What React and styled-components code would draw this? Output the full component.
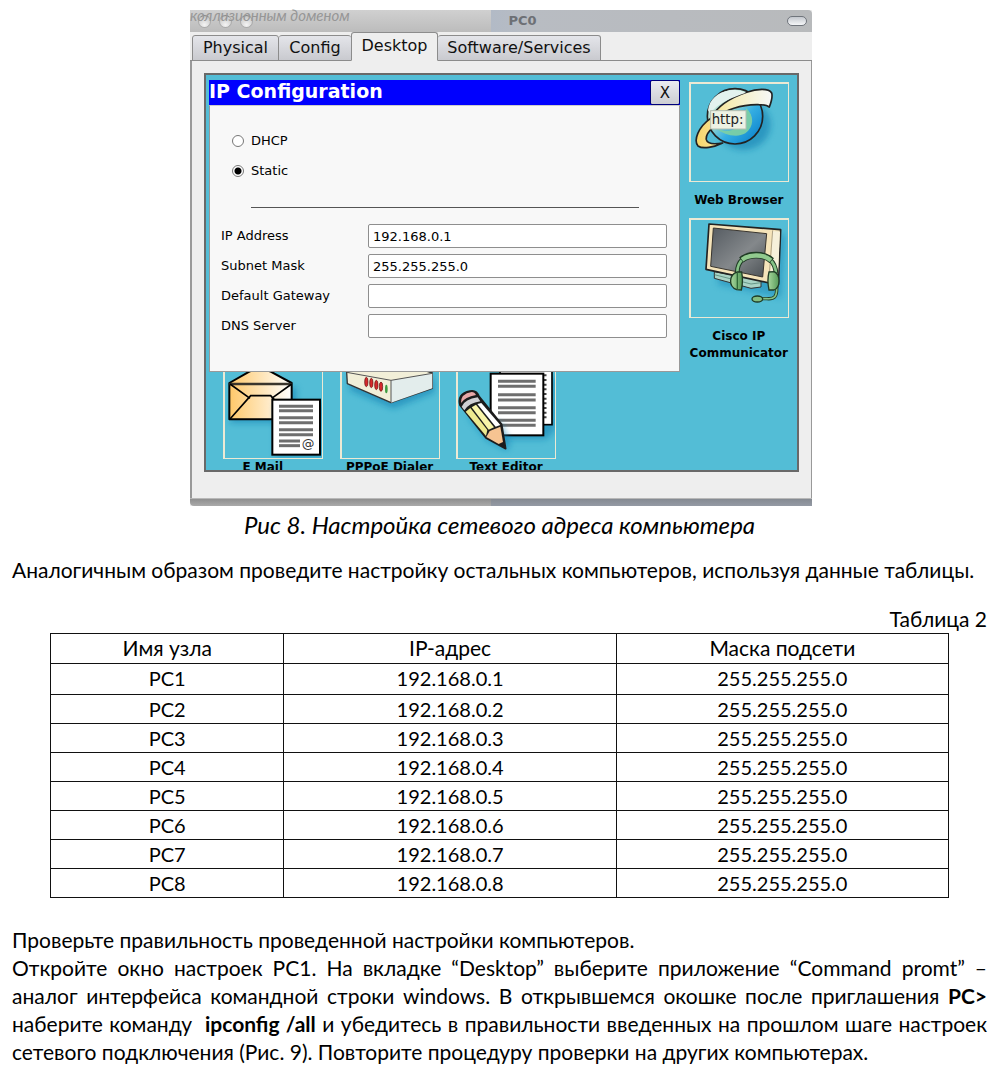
import React, { useState } from "react";
import styled, { createGlobalStyle } from "styled-components";

const uiFont = '"DejaVu Sans", Verdana, sans-serif';
const bodyFont = 'Lato, "Open Sans", sans-serif';

const GlobalStyle = createGlobalStyle`
  *, *::before, *::after { box-sizing: border-box; }
  body { margin: 0; background: #fff; color: #000; font-family: ${bodyFont}; }
`;

const Page = styled.main`
  padding: 10px 16px 12px 12px;
  font-size: 21px;
  line-height: 28px;
`;

const Figure = styled.figure`
  margin: 0;
  display: flex;
  flex-direction: column;
  align-items: center;
`;

const Caption = styled.figcaption`
  margin-top: 5px;
  font-style: italic;
  font-size: 24px;
`;

const AppWindow = styled.section`
  width: 622px;
  max-width: 100%;
  margin-left: 3px;
  font-family: ${uiFont};
  line-height: 16px;
  background: #eee;
`;

const TitleBar = styled.header`
  position: relative;
  display: flex;
  align-items: center;
  height: 22px;
  border-radius: 0 4px 0 0;
  background:
    linear-gradient(90deg, #b2bac6, #b8bcc2 12%, #b8babc) right / 321px 100% no-repeat,
    linear-gradient(#d0d0d0, #bcbcbc);
`;

const Ghost = styled.span`
  position: absolute;
  left: 0;
  top: -3px;
  font: italic 15px/16px ${bodyFont};
  color: #969696;
  white-space: nowrap;
`;

const Lights = styled.div`
  flex: 1 1 48px;
  display: flex;
  gap: 8px;
  padding-left: 8px;
`;

const Light = styled.span`
  width: 13px;
  height: 13px;
  border-radius: 50%;
  border: 1px solid #aaa;
  border-top-color: #888;
  background: radial-gradient(circle at 50% 80%, #f4f4f4, #bdbdbd);
`;

const WindowTitle = styled.h1`
  margin: 0;
  font-size: 13px;
  font-weight: 700;
  color: #6d7075;
`;

const Pill = styled.button`
  width: 20px;
  height: 10px;
  padding: 0;
  border: 1px solid #70757c;
  border-radius: 5px;
  background: linear-gradient(#c4c8ce, #f5f6f8);
`;

const TitleEnd = styled.div`
  flex: 1 1 0;
  display: flex;
  justify-content: flex-end;
  padding-right: 5px;
`;

const Tabs = styled.nav`
  display: flex;
  align-items: flex-end;
  height: 29px;
  padding-left: 2px;
  box-shadow: inset 0 -1px #8c8c8c;
`;

const Tab = styled.button`
  width: ${(p) => p.$width}px;
  height: ${(p) => (p.$active ? 29 : 26)}px;
  padding: 0 0 ${(p) => (p.$active ? 2 : 1)}px;
  border: 1px solid #8c8c8c;
  border-left-width: ${(p) => (p.$first || p.$active ? 1 : 0)}px;
  border-right-width: ${(p) => (p.$beforeActive ? 0 : 1)}px;
  border-bottom-color: ${(p) => (p.$active ? "#eee" : "#8c8c8c")};
  border-radius: 3px 3px 0 0;
  background: ${(p) => (p.$active ? "#eee" : "linear-gradient(#e4e5ea, #c9cacf)")};
  font: 16px/20px ${uiFont};
  color: #111;
  white-space: nowrap;
`;

const Pane = styled.div`
  padding: 12px 12px 26px 12px;
  border-left: 2px solid #999;
  border-right: 1px solid #999;
`;

const WindowFoot = styled.div`
  height: 8px;
  border-top: 1px solid #b8b8b8;
  border-radius: 0 0 0 4px;
  background:
    linear-gradient(#858a92, #949aa4) right / 321px 100% no-repeat,
    linear-gradient(#8f8f8f, #aaa);
`;

const Desktop = styled.div`
  position: relative;
  display: grid;
  grid-template-columns: repeat(5, 1fr);
  grid-template-rows: 136px 141px 1fr;
  height: 399px;
  padding: 7px 0 0 9px;
  overflow: hidden;
  border: 2px solid #696969;
  background: #53bdd6;
`;

const Shortcut = styled.div`
  grid-column: ${(p) => p.$col};
  grid-row: ${(p) => p.$row};
  min-width: 0;
  display: flex;
  flex-direction: column;
  align-items: center;
  gap: ${(p) => (p.$row === 3 ? 0 : 10)}px;
  font-size: 12px;
  font-weight: 700;
  line-height: 17px;
  text-align: center;
`;

const Tile = styled.div`
  flex: none;
  width: 100px;
  height: 100px;
  border: solid #ece9d4;
  border-width: 2px 1px 1px 2px;
  svg { display: block; width: 97px; height: 97px; }
`;

const Dialog = styled.form`
  position: absolute;
  left: 3px;
  top: 5px;
  width: 471px;
`;

const DialogBar = styled.div`
  display: flex;
  align-items: flex-start;
  justify-content: space-between;
  height: 25px;
  background: #0000fe;
  color: #fff;
`;

const DialogTitle = styled.h2`
  margin: 0;
  font-size: 19px;
  line-height: 22px;
  font-weight: 700;
`;

const CloseButton = styled.button`
  width: 30px;
  height: 25px;
  padding: 0;
  border: 1px solid #00007c;
  border-radius: 2px;
  background: linear-gradient(#eaebf0, #cdced3);
  font: 15px/20px ${uiFont};
  color: #111;
`;

const DialogBody = styled.div`
  height: 267px;
  padding: 20px 12px 0 11px;
  border: 1px solid #999;
  border-top-color: #ccc;
  background: #f8f8f8;
  font-size: 13px;
`;

const RadioLabel = styled.label`
  display: flex;
  align-items: center;
  gap: 7px;
  height: 30px;
  padding-left: 11px;
`;

const Radio = styled.input`
  appearance: none;
  width: 12px;
  height: 12px;
  margin: 0;
  border: 1px solid #777;
  border-radius: 50%;
  background: #fff;
  &:checked { background: radial-gradient(circle, #000 0 3px, #fff 4px); }
`;

const Rule = styled.hr`
  height: 1px;
  margin: 21px 28px 13px 30px;
  border: 0;
  background: #555;
`;

const Field = styled.label`
  display: grid;
  grid-template-columns: 147px 1fr;
  align-items: center;
  height: 30px;
`;

const FieldInput = styled.input`
  width: 100%;
  height: 24px;
  padding: 0 4px;
  border: 1px solid #8e8e8e;
  border-radius: 2px;
  background: #fff;
  font: 13px/16px ${uiFont};
  color: #000;
`;

const Paragraph = styled.p`
  margin: ${(p) => p.$top || 0}px 0 0;
  text-align: ${(p) => p.$align || "left"};
`;

const HostTable = styled.table`
  width: calc(100% - 76px);
  margin: 0 38px;
  table-layout: fixed;
  border-collapse: collapse;
  line-height: 28px;
  text-align: center;
  th, td {
    height: 29px;
    padding: 0;
    border: 1px solid #111;
    font-weight: 400;
    vertical-align: top;
  }
  td { font-size: 20px; }
  thead th { height: 30px; }
  tbody tr:first-child td { height: 31px; }
`;

const BrowserIcon = () => (
  <svg viewBox="63 43 291 291" aria-hidden="true">
    <defs>
      <linearGradient id="globe" x1="0" y1="0" x2="1" y2="1">
        <stop offset="0" stopColor="#eef7f8" /><stop offset=".35" stopColor="#a5dccb" />
        <stop offset=".6" stopColor="#35aee2" /><stop offset="1" stopColor="#0078c8" />
      </linearGradient>
      <linearGradient id="band" x1="0" x2="1">
        <stop offset="0" stopColor="#f8d568" /><stop offset=".45" stopColor="#f6edb8" /><stop offset="1" stopColor="#f6f8f8" />
      </linearGradient>
      <filter id="soft" x="-30%" y="-30%" width="160%" height="160%"><feGaussianBlur stdDeviation="9" /></filter>
    </defs>
    <ellipse cx="220" cy="165" rx="82" ry="76" fill="#1684b5" opacity=".65" filter="url(#soft)" />
    <circle cx="195" cy="140" r="83" fill="url(#globe)" stroke="#222" strokeWidth="5" />
    <path d="M228 115c26 22 24 58-2 76-28 16-66 2-86-14 20 8 46 10 60-4 18-16 30-34 28-58z" fill="#7fd0a2" opacity=".9" />
    <path d="M122 146C84 172 70 213 84 229c14 10 48 4 74-9-23 4-46 3-49-10-2-13 6-24 17-34l2-28C175 115 225 104 266 105c14 0 26 2 32 7 6-16 11-30 7-42-8-15-45-13-75-2-42 14-86 38-108 78z" fill="url(#band)" stroke="#222" strokeWidth="5" strokeLinejoin="round" />
    <path d="M114 122c4-32 28-55 66-60 18-2 36 0 48 7-40 14-84 30-108 62z" fill="#e3f2ee" />
    <rect x="122" y="123" width="106" height="55" fill="#edf2e4" stroke="#b4beb0" strokeWidth="3" />
    <text x="125" y="163" fontSize="40" fontWeight="400" fontFamily="DejaVu Sans, sans-serif" fill="#222">http:</text>
  </svg>
);

const PhoneIcon = () => (
  <svg viewBox="63 451 291 291" aria-hidden="true">
    <defs>
      <linearGradient id="screen" x1="0" y1="0" x2="1" y2="1">
        <stop offset="0" stopColor="#555b61" /><stop offset=".55" stopColor="#84888b" /><stop offset="1" stopColor="#4a5054" />
      </linearGradient>
      <linearGradient id="cup" x1="0" x2="1"><stop offset="0" stopColor="#a8d79c" /><stop offset="1" stopColor="#559a58" /></linearGradient>
    </defs>
    <path d="M140 500l206-5-12 190-190-40z" fill="#1684b5" opacity=".5" filter="url(#soft)" />
    <path d="M133 606l0 20 110 30 30-4 0-20z" fill="#a9d3c5" stroke="#333" strokeWidth="3" />
    <path d="M133 615l110 28 30-4" fill="none" stroke="#476" strokeWidth="2" />
    <path d="M117 463l215 17-7 165-27-5-190-41z" fill="#f5e4ba" stroke="#222" strokeWidth="5" strokeLinejoin="round" />
    <path d="M308 484l22 2-7 154-23-4z" fill="#f6f0da" />
    <path d="M308 482l-12 156" stroke="#8b8066" strokeWidth="2" />
    <path d="M130 475l160 17-12 130-156-32z" fill="url(#screen)" stroke="#39352f" strokeWidth="3" />
    <path d="M202 612c-4-76 113-78 116 0" fill="none" stroke="#203c25" strokeWidth="14" />
    <path d="M202 612c-4-76 113-78 116 0" fill="none" stroke="#85c386" strokeWidth="8" />
    <path d="M214 571c22-20 68-20 91 2" fill="none" stroke="#203c25" strokeWidth="20" />
    <path d="M216 570c22-17 65-17 87 2" fill="none" stroke="#91ca8e" strokeWidth="13" />
    <path d="M320 648c2 36-8 41-30 39h-35" fill="none" stroke="#203c25" strokeWidth="10" />
    <path d="M320 648c2 36-8 41-30 39h-35" fill="none" stroke="#85c386" strokeWidth="5" />
    <ellipse cx="262" cy="688" rx="16" ry="9" fill="#83bd80" stroke="#203c25" strokeWidth="4" />
    <path d="M202 607c-24 7-29 42-2 53l14 1c4-17 4-38 1-54z" fill="url(#cup)" stroke="#203c25" strokeWidth="4" />
    <path d="M202 610v49M309 608v50" stroke="#306a38" strokeWidth="4" />
    <path d="M297 607c-4 16-4 36 0 54l15 0c21-8 19-48 0-55z" fill="url(#cup)" stroke="#203c25" strokeWidth="4" />
  </svg>
);

const textLines = (x1, x2, ys) => ys.map((y) => <path key={y} d={`M${x1} ${y}H${x2}`} stroke="#6e6e6e" strokeWidth="9" />);

const MailIcon = () => (
  <svg viewBox="75 32 291 291" aria-hidden="true">
    <defs>
      <linearGradient id="paper" x1="0" x2="1"><stop offset="0" stopColor="#ffc869" /><stop offset="1" stopColor="#fff" /></linearGradient>
    </defs>
    <path d="M100 110h190v108H90z" fill="#1684b5" opacity=".6" filter="url(#soft)" />
    <path d="M88 98L148 64Q180 48 212 64L275 98V207H88z" fill="url(#paper)" stroke="#000" strokeWidth="6" strokeLinejoin="round" />
    <path d="M88 101H275" stroke="#3a352c" strokeWidth="7" />
    <path d="M90 101l60 43M275 101l-60 43M90 206l62-70h60l63 70" fill="none" stroke="#000" strokeWidth="5" />
    <path d="M225 160h145v160H225z" fill="#1684b5" opacity=".6" filter="url(#soft)" />
    <rect x="217" y="148" width="143" height="165" fill="#fff" stroke="#000" strokeWidth="6" />
    {textLines(237, 339, [168, 181, 202, 217, 238, 253])}
    {textLines(237, 300, [272, 286])}
    <text x="305" y="292" fontSize="38" fontWeight="400" fontFamily="DejaVu Sans, sans-serif" fill="#333">@</text>
  </svg>
);

const RouterIcon = () => (
  <svg viewBox="426 32 291 291" aria-hidden="true">
    <path d="M450 80l250 0 5 45-125 50-130-55z" fill="#1684b5" opacity=".65" filter="url(#soft)" />
    <path d="M440 66l130-40 127 42v46L573 157 442 100z" fill="#f2efd8" stroke="#333" strokeWidth="4" strokeLinejoin="round" />
    <path d="M573 90l124-21v45l-124 43z" fill="#e3edec" />
    <path d="M440 66l133 24 124-21M573 90v67" fill="none" stroke="#555" strokeWidth="3" />
    {[[499, 95], [514, 98], [529, 104], [543, 109]].map(([x, y]) => (
      <ellipse key={x} cx={x} cy={y} rx="5" ry="14" fill="#d8292c" stroke="#5a1512" strokeWidth="2" />
    ))}
    <ellipse cx="559" cy="116" rx="4" ry="13" fill="#3d9c42" />
  </svg>
);

const EditorIcon = () => (
  <svg viewBox="774 32 291 291" aria-hidden="true">
    <path d="M890 80h178v155l-30 32H890z" fill="#1684b5" opacity=".6" filter="url(#soft)" />
    <rect x="900" y="48" width="156" height="175" fill="#fff" stroke="#000" strokeWidth="5" />
    <path d="M1035 72V212" stroke="#444" strokeWidth="9" strokeDasharray="6 8" />
    <rect x="872" y="70" width="158" height="185" fill="#fff" stroke="#000" strokeWidth="6" />
    {textLines(894, 1007, [93, 108, 133, 149, 172, 187, 210, 225])}
    <path d="M800 195l60 75 60 30 12-20-30-60z" fill="#1684b5" opacity=".6" filter="url(#soft)" />
    <path d="M780 165Q770 130 810 122Q830 118 837 138L905 222 917 295 858 263z" fill="#1c1c1c" stroke="#1c1c1c" strokeWidth="5" strokeLinejoin="round" />
    <path d="M783 158Q782 130 815 125Q824 125 828 134Q795 140 783 158z" fill="#e8a8a8" />
    <path d="M785 169Q795 146 833 141L841 153Q807 158 793 180z" fill="#d0d0d4" />
    <path d="M797 184l14-11 51 66-4 18z" fill="#eee98f" />
    <path d="M815 171l13-8 54 68-16 7z" fill="#f8f4a8" />
    <path d="M832 161l12-3 57 66-14 5z" fill="#fff" />
    <path d="M859 260l10-18 32-13 8 46-13 6z" fill="#f6c492" />
  </svg>
);

const shortcuts = [
  { label: "Web Browser", col: 5, row: 1, Icon: BrowserIcon },
  { label: "Cisco IP Communicator", col: 5, row: 2, Icon: PhoneIcon },
  { label: "E Mail\u00a0\u00a0\u00a0\u00a0\u00a0", col: 1, row: 3, Icon: MailIcon },
  { label: "PPPoE Dialer", col: 2, row: 3, Icon: RouterIcon },
  { label: "Text Editor", col: 3, row: 3, Icon: EditorIcon },
];

const tabs = [
  { label: "Physical", width: 87 },
  { label: "Config", width: 72 },
  { label: "Desktop", width: 87 },
  { label: "Software/Services", width: 163 },
];

const fields = [
  ["IP Address", "192.168.0.1"],
  ["Subnet Mask", "255.255.255.0"],
  ["Default Gateway", ""],
  ["DNS Server", ""],
];

const hosts = [1, 2, 3, 4, 5, 6, 7, 8];

export default function App() {
  const [mode, setMode] = useState("Static");
  return (
    <>
      <GlobalStyle />
      <Page>
        <Figure>
          <AppWindow>
            <TitleBar>
              <Lights><Light /><Light /><Light /></Lights>
              <Ghost>коллизионным доменом</Ghost>
              <WindowTitle>PC0</WindowTitle>
              <TitleEnd><Pill type="button" aria-label="Toolbar" /></TitleEnd>
            </TitleBar>
            <Tabs>
              {tabs.map((t, i) => (
                <Tab key={t.label} type="button" $width={t.width} $first={i === 0} $active={i === 2} $beforeActive={i === 1}>
                  {t.label}
                </Tab>
              ))}
            </Tabs>
            <Pane>
              <Desktop>
                {shortcuts.map(({ label, col, row, Icon }) => (
                  <Shortcut key={label} $col={col} $row={row}>
                    <Tile><Icon /></Tile>
                    {label}
                  </Shortcut>
                ))}
                <Dialog>
                  <DialogBar>
                    <DialogTitle>IP Configuration</DialogTitle>
                    <CloseButton type="button">X</CloseButton>
                  </DialogBar>
                  <DialogBody>
                    {["DHCP", "Static"].map((m) => (
                      <RadioLabel key={m}>
                        <Radio type="radio" name="mode" checked={mode === m} onChange={() => setMode(m)} />
                        {m}
                      </RadioLabel>
                    ))}
                    <Rule />
                    {fields.map(([label, value]) => (
                      <Field key={label}>
                        {label}
                        <FieldInput type="text" defaultValue={value} />
                      </Field>
                    ))}
                  </DialogBody>
                </Dialog>
              </Desktop>
            </Pane>
            <WindowFoot />
          </AppWindow>
          <Caption>Рис 8. Настройка сетевого адреса компьютера</Caption>
        </Figure>

        <Paragraph $top={17}>
          Аналогичным образом проведите настройку остальных компьютеров, используя данные таблицы.
        </Paragraph>
        <Paragraph $top={21} $align="right">Таблица 2</Paragraph>

        <HostTable>
          <colgroup>
            <col width="26%" />
            <col width="37%" />
            <col width="37%" />
          </colgroup>
          <thead>
            <tr><th>Имя узла</th><th>IP-адрес</th><th>Маска подсети</th></tr>
          </thead>
          <tbody>
            {hosts.map((n) => (
              <tr key={n}><td>PC{n}</td><td>192.168.0.{n}</td><td>255.255.255.0</td></tr>
            ))}
          </tbody>
        </HostTable>

        <Paragraph $top={28}>Проверьте правильность проведенной настройки компьютеров.</Paragraph>
        <Paragraph $align="justify">
          Откройте окно настроек PC1. На вкладке “Desktop” выберите приложение “Command promt” – аналог
          интерфейса командной строки windows. В открывшемся окошке после приглашения <b>PC&gt;</b> наберите
          команду&nbsp; <b>ipconfig /all</b> и убедитесь в правильности введенных на прошлом шаге настроек
          сетевого подключения (Рис. 9). Повторите процедуру проверки на других компьютерах.
        </Paragraph>
      </Page>
    </>
  );
}
